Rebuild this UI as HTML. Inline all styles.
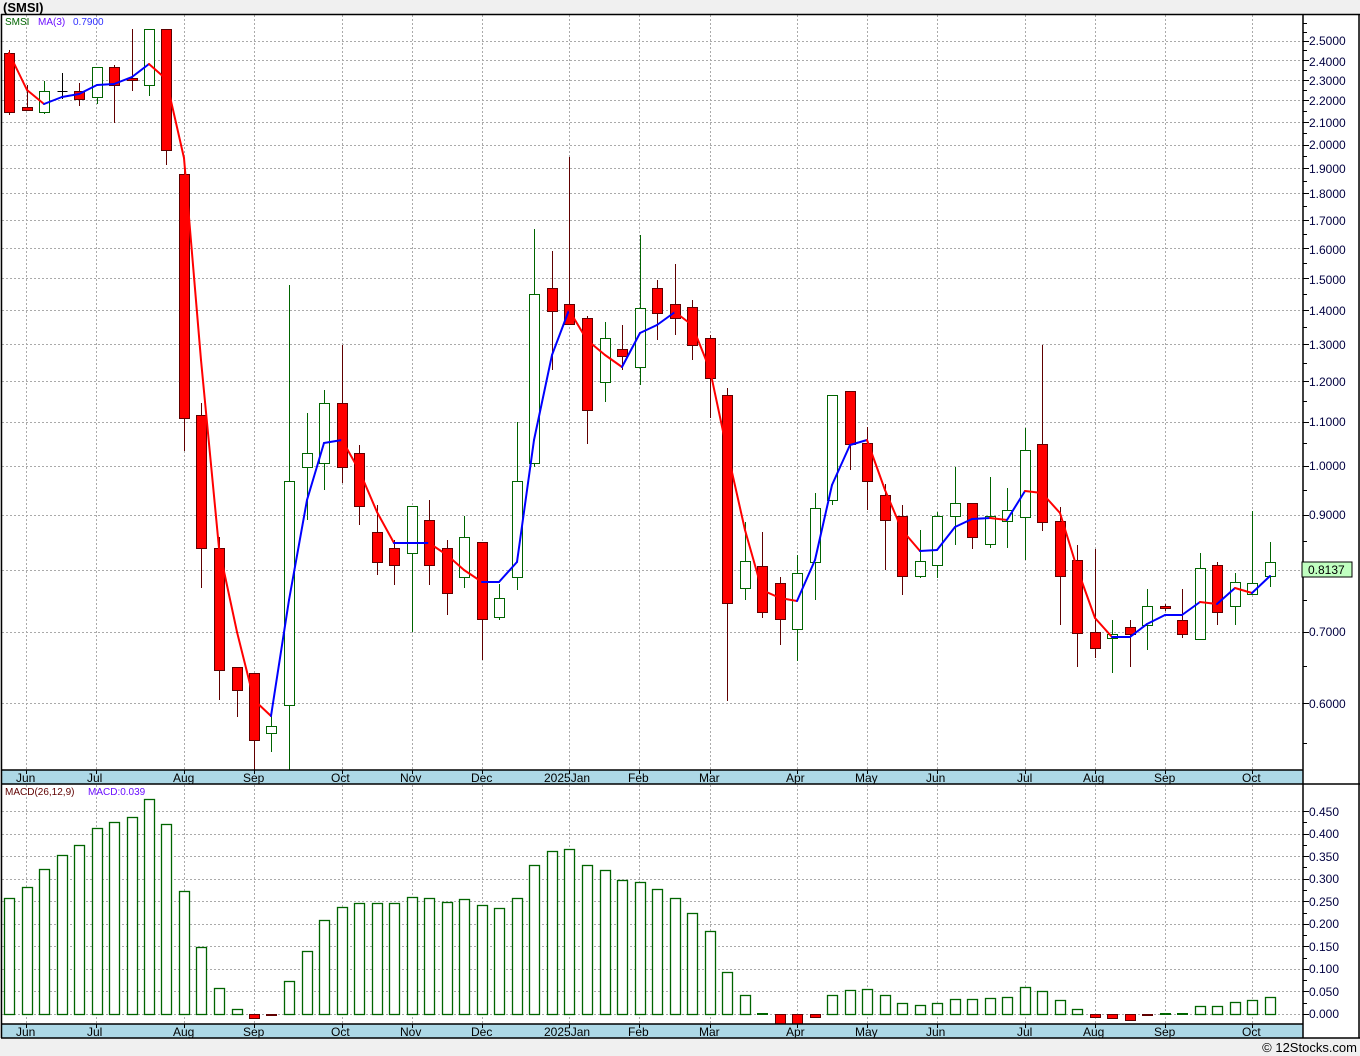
<!DOCTYPE html>
<html><head><meta charset="utf-8"><style>
html,body{margin:0;padding:0;background:#f0f0f0;}
svg{display:block;font-family:"Liberation Sans","DejaVu Sans",sans-serif;}
</style></head><body>
<svg id="s" width="1360" height="1056" xmlns="http://www.w3.org/2000/svg">
<rect x="0" y="0" width="1360" height="1056" fill="#f0f0f0"/>
<rect x="1" y="14" width="1358" height="1024" fill="#fff"/>
<text x="3" y="12" font-size="13" font-weight="bold" fill="#000">(SMSI)</text>
<g id="grid" stroke="#aaa" stroke-dasharray="2,2" stroke-width="1"></g>
<g id="price"></g>
<g id="macd"></g>
<rect x="1" y="770" width="1302" height="14" fill="#add8e6"/>
<rect x="1" y="1024" width="1302" height="14" fill="#add8e6"/>
<g stroke="#000" stroke-width="1.5">
<line x1="1" y1="14.5" x2="1360" y2="14.5"/>
<line x1="1" y1="770" x2="1303" y2="770"/>
<line x1="1" y1="784" x2="1360" y2="784"/>
<line x1="1" y1="1024" x2="1303" y2="1024"/>
<line x1="1" y1="1038" x2="1360" y2="1038"/>
<line x1="1.5" y1="14" x2="1.5" y2="1038"/>
<line x1="1303" y1="14" x2="1303" y2="1038"/>
<line x1="1359" y1="14" x2="1359" y2="1038"/>
</g>
<g id="ticks" stroke="#000" stroke-width="1"></g>
<g font-size="12" fill="#000">
<text x="16" y="782">Jun</text><text x="87" y="782">Jul</text><text x="173" y="782">Aug</text><text x="243" y="782">Sep</text><text x="331" y="782">Oct</text><text x="400" y="782">Nov</text><text x="471" y="782">Dec</text><text x="544" y="782">2025Jan</text><text x="628" y="782">Feb</text><text x="699" y="782">Mar</text><text x="786" y="782">Apr</text><text x="855" y="782">May</text><text x="926" y="782">Jun</text><text x="1017" y="782">Jul</text><text x="1083" y="782">Aug</text><text x="1154" y="782">Sep</text><text x="1242" y="782">Oct</text>
<text x="16" y="1036">Jun</text><text x="87" y="1036">Jul</text><text x="173" y="1036">Aug</text><text x="243" y="1036">Sep</text><text x="331" y="1036">Oct</text><text x="400" y="1036">Nov</text><text x="471" y="1036">Dec</text><text x="544" y="1036">2025Jan</text><text x="628" y="1036">Feb</text><text x="699" y="1036">Mar</text><text x="786" y="1036">Apr</text><text x="855" y="1036">May</text><text x="926" y="1036">Jun</text><text x="1017" y="1036">Jul</text><text x="1083" y="1036">Aug</text><text x="1154" y="1036">Sep</text><text x="1242" y="1036">Oct</text>
</g>
<g font-size="12" fill="#000040">
<text x="1309" y="45">2.5000</text><text x="1309" y="66">2.4000</text><text x="1309" y="85">2.3000</text><text x="1309" y="105">2.2000</text><text x="1309" y="127">2.1000</text><text x="1309" y="149">2.0000</text><text x="1309" y="173">1.9000</text><text x="1309" y="198">1.8000</text><text x="1309" y="225">1.7000</text><text x="1309" y="254">1.6000</text><text x="1309" y="284">1.5000</text><text x="1309" y="315">1.4000</text><text x="1309" y="349">1.3000</text><text x="1309" y="386">1.2000</text><text x="1309" y="426">1.1000</text><text x="1309" y="470">1.0000</text><text x="1309" y="519">0.9000</text><text x="1309" y="636">0.7000</text><text x="1309" y="708">0.6000</text>
<text x="1309" y="816">0.450</text><text x="1309" y="838">0.400</text><text x="1309" y="861">0.350</text><text x="1309" y="883">0.300</text><text x="1309" y="906">0.250</text><text x="1309" y="928">0.200</text><text x="1309" y="951">0.150</text><text x="1309" y="973">0.100</text><text x="1309" y="996">0.050</text><text x="1309" y="1018">0.000</text>
</g>
<rect x="1302" y="562" width="50" height="15" fill="#c0ffc0" stroke="#000" stroke-width="1"/>
<text x="1308" y="574" font-size="12" fill="#000">0.8137</text>
<text x="5" y="25" font-size="10" fill="#006400">SMSI</text>
<text x="38" y="25" font-size="10" fill="#6a0dff">MA(3)</text>
<text x="73" y="25" font-size="10" fill="#3030ff">0.7900</text>
<text x="5" y="795" font-size="10" fill="#600000">MACD(26,12,9)</text>
<text x="88" y="795" font-size="10" fill="#6a0dff">MACD:0.039</text>
<text x="1357" y="1052" font-size="13" fill="#000" text-anchor="end">© 12Stocks.com</text>
</svg>
<script>
var NS="http://www.w3.org/2000/svg";
function el(p,t,a){var e=document.createElementNS(NS,t);for(var k in a)e.setAttribute(k,a[k]);p.appendChild(e);return e;}
var S=document.getElementById('s'),G=document.getElementById('grid'),P=document.getElementById('price'),M=document.getElementById('macd'),T=document.getElementById('ticks');
function py(p){return 41+(Math.log(2.5)-Math.log(p))*463.9;}
var months=[26,96,184,254,342,412,482,569,639,710,797,867,937,1025,1095,1165,1252];
months.forEach(function(x){el(G,'line',{x1:x+.5,y1:15,x2:x+.5,y2:770});el(G,'line',{x1:x+.5,y1:785,x2:x+.5,y2:1024});
el(T,'line',{x1:x+.5,y1:770,x2:x+.5,y2:774});el(T,'line',{x1:x+.5,y1:1024,x2:x+.5,y2:1028});});
[2.5,2.4,2.3,2.2,2.1,2.0,1.9,1.8,1.7,1.6,1.5,1.4,1.3,1.2,1.1,1.0,0.9,0.8,0.7,0.6].forEach(function(p){var y=Math.round(py(p))+.5;el(G,'line',{x1:2,y1:y,x2:1303,y2:y});el(T,'line',{x1:1303,y1:y,x2:1309,y2:y});});
for(var p=0.55;p<2.6;p+=0.05){var y=Math.round(py(p))+.5;if(y>16&&y<768)el(T,'line',{x1:1303,y1:y,x2:1307,y2:y});}
for(var v=0;v<=0.45001;v+=0.05){var y=Math.round(1014-v*451)+.5;el(G,'line',{x1:2,y1:y,x2:1303,y2:y});el(T,'line',{x1:1303,y1:y,x2:1309,y2:y});}
for(var v=0.025;v<=0.47;v+=0.05){var y=Math.round(1014-v*451)+.5;el(T,'line',{x1:1303,y1:y,x2:1307,y2:y});}
var C=[[9,50,115,53,112,'r'],[27,85,110,107,110,'r'],[44,81,114,91,112,'g'],[62,73,99,91,92,'k'],[79,83,106,91,99,'r'],[97,67,104,67,97,'g'],[114,65,123,67,85,'r'],[132,29,91,78,80,'r'],[149,29,96,29,85,'g'],[166,29,165,29,150,'r'],[184,158,451,174,418,'r'],[201,403,588,415,548,'r'],[219,537,700,548,670,'r'],[237,667,717,667,690,'r'],[254,673,770,673,740,'r'],[271,712,752,726,733,'g'],[289,285,770,481,705,'g'],[307,413,520,453,467,'g'],[324,390,490,403,463,'g'],[342,345,483,403,467,'r'],[359,445,525,453,506,'r'],[377,505,575,532,562,'r'],[394,540,585,548,565,'r'],[412,506,632,506,553,'g'],[429,500,585,520,565,'r'],[447,540,615,548,593,'r'],[464,516,588,537,577,'g'],[482,542,660,542,619,'r'],[499,584,620,598,617,'g'],[517,422,590,481,577,'g'],[534,229,467,294,463,'g'],[552,251,370,288,311,'r'],[569,157,324,304,324,'r'],[587,316,444,318,410,'r'],[605,322,402,338,382,'g'],[622,325,370,349,356,'r'],[640,235,385,308,367,'g'],[657,280,340,288,313,'r'],[675,264,335,304,318,'r'],[692,300,360,307,345,'r'],[710,335,418,338,378,'r'],[727,388,701,395,603,'r'],[745,522,600,561,588,'g'],[762,532,618,566,612,'r'],[780,577,645,583,619,'r'],[797,555,661,573,629,'g'],[815,493,600,508,562,'g'],[832,395,505,395,500,'g'],[850,391,470,391,444,'r'],[867,427,510,443,481,'r'],[885,484,570,495,520,'r'],[902,505,595,516,576,'r'],[920,530,578,561,576,'g'],[937,512,578,516,565,'g'],[955,467,545,503,516,'g'],[972,503,549,503,537,'r'],[990,477,548,516,544,'g'],[1007,488,548,510,521,'g'],[1025,428,560,450,517,'g'],[1042,345,531,444,522,'r'],[1060,507,625,521,576,'r'],[1077,545,667,560,633,'r'],[1095,549,658,632,648,'r'],[1112,620,673,634,638,'g'],[1130,620,667,627,634,'r'],[1147,589,650,606,625,'g'],[1165,604,611,606,608,'r'],[1182,589,638,620,634,'r'],[1200,553,639,568,639,'g'],[1217,562,625,565,612,'r'],[1235,573,625,582,606,'g'],[1252,511,595,583,594,'g'],[1270,542,587,562,576,'g']];
C.forEach(function(c){var x=c[0]+.5,t=c[5];var wc=t=='r'?'#600000':t=='g'?'#006400':'#000';
el(P,'line',{x1:x,y1:c[1],x2:x,y2:c[2],stroke:wc,'stroke-width':1});
if(t=='k'){el(P,'line',{x1:x-5,y1:c[3]+.5,x2:x+5,y2:c[3]+.5,stroke:'#000'});return;}
el(P,'rect',{x:c[0]-4.5,y:c[3]+.5,width:10,height:Math.max(1,c[4]-c[3]),fill:t=='r'?'#ff0000':'#fff',stroke:t=='r'?'#600000':'#006400','stroke-width':1});});
var ma=[[9,53],[27,90],[44,104],[62,97],[79,94],[97,85],[114,84],[132,77],[149,64],[166,79],[184,158],[201,360],[219,548],[237,632],[254,700],[271,716],[289,600],[307,500],[324,443],[342,440],[359,470],[377,512],[394,543],[412,543],[429,543],[447,555],[464,570],[482,582],[499,582],[517,562],[534,440],[552,355],[569,310],[587,340],[605,355],[622,367],[640,333],[657,325],[675,312],[692,325],[710,370],[727,450],[745,530],[762,590],[780,598],[797,601],[815,560],[832,485],[850,445],[867,440],[885,490],[902,530],[920,551],[937,550],[955,527],[972,519],[990,518],[1007,520],[1025,491],[1042,493],[1060,513],[1077,568],[1095,618],[1112,637],[1130,637],[1147,624],[1165,615],[1182,615],[1200,602],[1217,604],[1235,588],[1252,593],[1270,576]];
for(var i=1;i<ma.length;i++){var a=ma[i-1],b=ma[i];el(P,'line',{x1:a[0],y1:a[1],x2:b[0],y2:b[1],stroke:b[1]>a[1]?'#ff0000':'#0000ff','stroke-width':2,'stroke-linecap':'round'});}
var H=[[9,898],[27,887],[44,869],[62,855],[79,845],[97,828],[114,822],[132,817],[149,799],[166,824],[184,891],[201,947],[219,988],[237,1009],[254,1018],[271,1015],[289,981],[307,951],[324,920],[342,907],[359,903],[377,903],[394,903],[412,897],[429,898],[447,902],[464,899],[482,905],[499,908],[517,898],[534,865],[552,851],[569,849],[587,865],[605,870],[622,880],[640,882],[657,889],[675,898],[692,913],[710,931],[727,972],[745,995],[762,1013],[780,1024],[797,1024],[815,1017],[832,995],[850,990],[867,989],[885,995],[902,1003],[920,1005],[937,1003],[955,999],[972,999],[990,998],[1007,997],[1025,987],[1042,991],[1060,1000],[1077,1009],[1095,1017],[1112,1018],[1130,1020],[1147,1015],[1165,1013],[1182,1013],[1200,1006],[1217,1006],[1235,1002],[1252,1000],[1270,997]];
H.forEach(function(h){var x=h[0]-5,y0=1014;
if(h[1]>y0+0.5){el(M,'rect',{x:x+.5,y:y0+.5,width:10,height:h[1]-y0,fill:'#ff0000',stroke:'#600000'});}
else if(y0-h[1]<2){el(M,'line',{x1:x,y1:y0,x2:x+11,y2:y0,stroke:'#006400','stroke-width':2});}
else el(M,'rect',{x:x+.5,y:h[1]+.5,width:10,height:y0-h[1],fill:'#fff',stroke:'#006400','stroke-width':1.3});});
</script>
</body></html>
